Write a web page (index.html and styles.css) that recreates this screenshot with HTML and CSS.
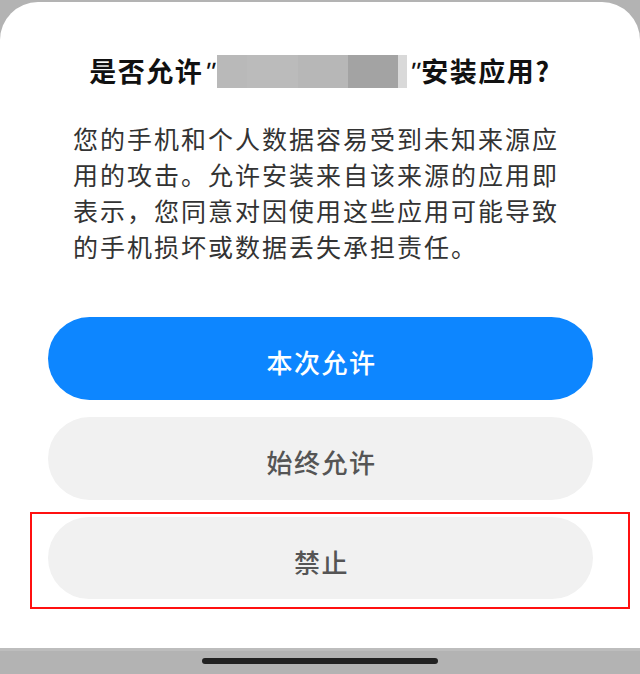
FILE: index.html
```html
<!DOCTYPE html>
<html lang="zh-CN">
<head>
<meta charset="utf-8">
<title>安装应用</title>
<link rel="stylesheet" href="styles.css">
</head>
<body>
<div class="screen">
  <div class="sheet">
    <h1 class="title">是否允许<span class="quote">"</span><span class="redact"><i class="s1"></i><i class="s2"></i><i class="s3"></i><i class="s4"></i><i class="s5"></i></span><span class="quote">"</span>安装应用?</h1>
    <p class="message">您的手机和个人数据容易受到未知来源应用的攻击。允许安装来自该来源的应用即表示，您同意对因使用这些应用可能导致的手机损坏或数据丢失承担责任。</p>
    <div class="actions">
      <button class="btn btn-primary">本次允许</button>
      <button class="btn btn-secondary">始终允许</button>
      <div class="highlight">
        <button class="btn btn-secondary">禁止</button>
      </div>
    </div>
  </div>
  <div class="navbar"><span class="home-indicator"></span></div>
</div>
</body>
</html>
```

FILE: styles.css
```css
* { box-sizing: border-box; }
html, body {
  margin: 0;
  padding: 0;
}
body {
  background: #b3b3b3;
  font-family: "Noto Sans CJK SC", "Noto Sans", sans-serif;
  width: 640px;
  height: 674px;
  overflow: hidden;
}
.screen {
  display: flex;
  flex-direction: column;
  height: 674px;
  padding-top: 2px;
}
.sheet {
  background: #ffffff;
  border-radius: 38px 38px 0 0;
  height: 646px;
  display: flex;
  flex-direction: column;
  align-items: center;
}
.title {
  margin: 51px 0 0 0;
  height: 36px;
  font-size: 27px;
  line-height: 36px;
  font-weight: 700;
  color: #111;
  letter-spacing: 1.5px;
  display: flex;
  align-items: center;
  white-space: nowrap;
}
.quote {
  font-family: "Liberation Sans", sans-serif;
  font-weight: 400;
  font-size: 28px;
  letter-spacing: 0;
  width: 13px;
  text-align: center;
  transform: translateY(2px) skewX(-14deg);
}
.redact {
  display: flex;
  height: 33px;
  margin: 0 1px;
}
.redact i { display: block; height: 100%; }
.s1 { width: 30px; background: #b9b9b9; }
.s2 { width: 51px; background: #bbbbbb; }
.s3 { width: 50px; background: #b7b7b7; }
.s4 { width: 50px; background: #a3a3a3; }
.s5 { width: 9px; background: #d9d9d9; }
.message {
  margin: 31px 0 0 0;
  width: 494px;
  padding-left: 0;
  font-size: 25px;
  line-height: 36px;
  letter-spacing: 2px;
  color: #333;
}
.actions {
  margin-top: 53px;
  display: flex;
  flex-direction: column;
  gap: 17px;
  width: 545px;
  margin-left: 1px;
}
.btn {
  display: flex;
  align-items: center;
  justify-content: center;
  width: 545px;
  height: 83px;
  border: none;
  border-radius: 42px;
  font-family: "Noto Sans CJK SC", sans-serif;
  font-size: 26px;
  letter-spacing: 1.5px;
  font-weight: 500;
  padding: 6px 0 0 2px;
  margin: 0;
}
.btn-primary {
  background: #0d86ff;
  color: #ffffff;
}
.btn-secondary {
  background: #f1f1f1;
  color: #555555;
}
.highlight {
  position: relative;
}
.highlight .btn { height: 82px; }
.highlight::after {
  content: "";
  position: absolute;
  top: -5px;
  left: -18px;
  right: -37px;
  bottom: -10px;
  border: 2px solid #ff1010;
  pointer-events: none;
}
.navbar {
  height: 26px;
  background: #b3b3b3;
  border-top: 3px solid #bdbdbd;
  display: flex;
  justify-content: center;
  padding-top: 7px;
}
.home-indicator {
  display: block;
  width: 236px;
  height: 6px;
  border-radius: 3px;
  background: #222;
}
```
